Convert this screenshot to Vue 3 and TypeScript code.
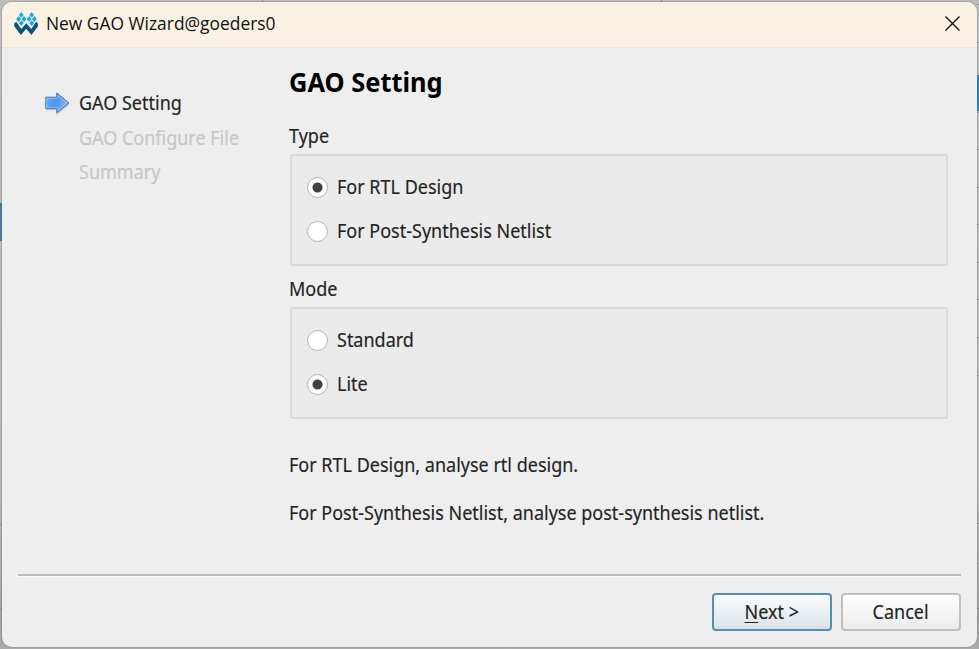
<script setup lang="ts">
import { ref } from 'vue'

interface Option { id: string; label: string }
interface Group { title: string; options: Option[] }

const steps = [
  { label: 'GAO Setting', active: true },
  { label: 'GAO Configure File', active: false },
  { label: 'Summary', active: false },
]

const groups: Group[] = [
  {
    title: 'Type',
    options: [
      { id: 'rtl', label: 'For RTL Design' },
      { id: 'netlist', label: 'For Post-Synthesis Netlist' },
    ],
  },
  {
    title: 'Mode',
    options: [
      { id: 'standard', label: 'Standard' },
      { id: 'lite', label: 'Lite' },
    ],
  },
]

const selected = ref<string[]>(['rtl', 'lite'])
const notes = [
  'For RTL Design, analyse rtl design.',
  'For Post-Synthesis Netlist, analyse post-synthesis netlist.',
]
const diamonds = [
  [7.3, 2.9], [17.7, 2.9], [4.6, 7], [10, 7], [15.1, 7], [20.4, 7], [7.3, 11.1], [17.7, 11.1],
]
// Row lines of the window behind the dialog
const rightLines = [4, 42, 112, 149, 187, 224, 262, 299, 337, 375, 523, 563, 608]
const leftLines = [524, 608]
</script>

<template>
  <div class="desktop">
    <i class="mark selected-row"></i>
    <i class="mark toolbar-item"></i>
    <i class="mark divider d1"></i>
    <i class="mark divider d2"></i>
    <i v-for="y in rightLines" :key="'r' + y" class="mark line right" :style="{ top: y + 'px' }"></i>
    <i v-for="y in leftLines" :key="'l' + y" class="mark line left" :style="{ top: y + 'px' }"></i>
    <div class="window">
      <header class="titlebar">
        <svg class="logo" width="24" height="24" viewBox="0 0 24 24">
          <path d="M.2 11.5L2.3 9.8l5 7.2 5-5.8 5 5.8L22 9.8l1.9 1.7v2.8l-6.3 8.7-5.4-6.3L6.9 23 .2 14.3z" fill="#0b527d" />
          <path
            v-for="(d, i) in diamonds"
            :key="i"
            :d="`M${d[0]} ${d[1] - 2.9}l2.4 2.9-2.4 2.9-2.4-2.9z`"
            fill="#18a9e6"
          />
        </svg>
        <span class="caption"><span>New GAO Wizard@goeders0</span></span>
        <svg class="close" width="15" height="15" viewBox="0 0 15 15">
          <path d="M.5.5l14 14M14.5.5l-14 14" fill="none" stroke="#111" stroke-width="1.4" />
        </svg>
      </header>
      <div class="body">
        <nav class="steps">
          <div v-for="s in steps" :key="s.label" class="step" :class="{ active: s.active }">
            <span class="slot">
              <svg v-if="s.active" class="arrow" width="26" height="25" viewBox="0 0 26 25">
                <defs>
                  <linearGradient id="blue" x1="0" y1="0" x2="1" y2="0.3">
                    <stop offset="0" stop-color="#72b1fb" />
                    <stop offset="0.5" stop-color="#4c93ef" />
                    <stop offset="1" stop-color="#7db7fa" />
                  </linearGradient>
                </defs>
                <path d="M1.5 18.5h10.8v4l3-2.3 8.5-7.5" fill="none" stroke="#000" stroke-opacity=".14" stroke-width="2" />
                <path d="M.8 6.2h11V2L24 12 11.8 21.8v-4.2H.8z" fill="url(#blue)" stroke="#426da6" />
                <path d="M1.8 7.2h11V4.3l9.5 7.7-9.5 7.5v-2.9h-11z" fill="none" stroke="#a6cdfb" stroke-opacity=".7" />
              </svg>
            </span>
            <span class="text">{{ s.label }}</span>
          </div>
        </nav>
        <main class="page">
          <h1><span>GAO Setting</span></h1>
          <section v-for="g in groups" :key="g.title" class="group">
            <div class="group-title"><span class="text">{{ g.title }}</span></div>
            <div class="box">
              <div v-for="o in g.options" :key="o.id" class="option">
                <span class="radio" :class="{ on: selected.includes(o.id) }"></span>
                <span class="text">{{ o.label }}</span>
              </div>
            </div>
          </section>
          <div class="notes">
            <p v-for="n in notes" :key="n"><span class="text">{{ n }}</span></p>
          </div>
        </main>
      </div>
      <footer class="footer">
        <button class="btn primary"><span class="text"><span class="key">N</span>ext &gt;</span></button>
        <button class="btn"><span class="text">Cancel</span></button>
      </footer>
    </div>
  </div>
</template>

<style>
body { background: #b4b4b4; overflow: hidden; }
</style>

<style scoped>
.desktop {
  position: relative;
  box-sizing: border-box;
  width: 979px;
  height: 649px;
  padding: 2px;
  background: linear-gradient(#bcbcbc, #b4b4b4 75%, #a0a0a0 95%, #ababab);
  font-family: "Noto Sans", sans-serif;
  font-size: 19px;
  color: #232323;
}
.mark { position: absolute; }
.selected-row { left: 0; top: 203px; width: 2px; height: 38px; background: #46789b; }
.toolbar-item { left: 977px; top: 75px; width: 2px; height: 36px; background: #3079bd; }
.divider { top: 0; width: 1px; height: 2px; background: #8d8d8d; }
.d1 { left: 262px; }
.d2 { left: 661px; }
.line { width: 2px; height: 1px; background: #8d8d8d; }
.right { left: 977px; }
.left { left: 0; }
.window {
  position: relative;
  display: flex;
  flex-direction: column;
  box-sizing: border-box;
  width: 975px;
  height: 645px;
  border-radius: 10px;
  background: #eee;
  box-shadow: 0 0 0 1px rgba(110, 110, 110, 0.25);
  overflow: hidden;
}
.text {
  display: inline-block;
  transform: scaleX(0.947);
  transform-origin: 0 50%;
  white-space: nowrap;
  -webkit-text-stroke: 0.15px currentColor;
}
.titlebar {
  display: flex;
  align-items: center;
  box-sizing: border-box;
  height: 46px;
  padding: 0 17px 2px 12px;
  background: #f9f2e2;
  border-bottom: 1px solid #e7e7ea;
}
.caption {
  margin: -1px 0 0 8px;
  flex: 1;
  font-family: "Open Sans", sans-serif;
  font-size: 18px;
  line-height: 24px;
  color: #111;
  white-space: nowrap;
}
.caption span { display: inline-block; transform: scaleX(0.966); transform-origin: 0 50%; }
.close { flex: none; }
.body { display: flex; height: 526px; }
.steps { width: 287px; padding-top: 38px; box-sizing: border-box; }
.step { display: flex; align-items: center; height: 34.5px; color: #c6c6c6; }
.step.active { color: #232323; }
.slot { width: 34px; height: 25px; margin-left: 43px; flex: none; }
.step .text { margin-left: -0.5px; }
.arrow { display: block; }
.page { width: 659px; padding-top: 16px; }
h1 { margin: 0; font-size: 26px; line-height: 36px; font-weight: 700; color: #000; }
h1 span { display: inline-block; transform: scaleX(0.978); transform-origin: 0 50%; }
.group { height: 153px; }
h1 + .group { margin-top: 20px; }
.group-title { height: 34px; line-height: 32px; }
.box {
  box-sizing: border-box;
  width: 658px;
  height: 112px;
  margin-left: 1px;
  padding: 9px 14.5px;
  border: 2px solid #dadada;
  border-radius: 3px;
  background: #ebebeb;
}
.option { display: flex; align-items: center; height: 44px; gap: 9.5px; }
.option .text { margin-top: -1px; }
.radio {
  box-sizing: border-box;
  width: 21px;
  height: 21px;
  flex: none;
  border: 1.5px solid #b3b3b3;
  border-radius: 50%;
  background: #fff;
}
.radio.on { background: radial-gradient(circle, #414141 4.5px, #fff 5.5px); }
.notes { padding-top: 15px; }
.notes p { margin: 0; height: 48px; line-height: 48px; }
.footer {
  display: flex;
  justify-content: flex-end;
  gap: 9px;
  margin: 0 16px;
  padding-top: 17px;
  border-top: 2px solid #bcbcbc;
  box-shadow: inset 0 1px #fafafa;
}
.btn {
  box-sizing: border-box;
  width: 120px;
  height: 38px;
  padding: 0;
  border: 2px solid #c0c0c0;
  border-radius: 4px;
  background: linear-gradient(#fefefe, #ececec);
  font: inherit;
  line-height: 34px;
  color: #232323;
}
.btn .text { transform-origin: 50% 50%; }
.primary { border-color: #568fb6; background: linear-gradient(#fbfdfe, #d9e1e8); }
.key { text-decoration: underline; text-decoration-thickness: 1.3px; text-underline-offset: 3px; }
</style>
